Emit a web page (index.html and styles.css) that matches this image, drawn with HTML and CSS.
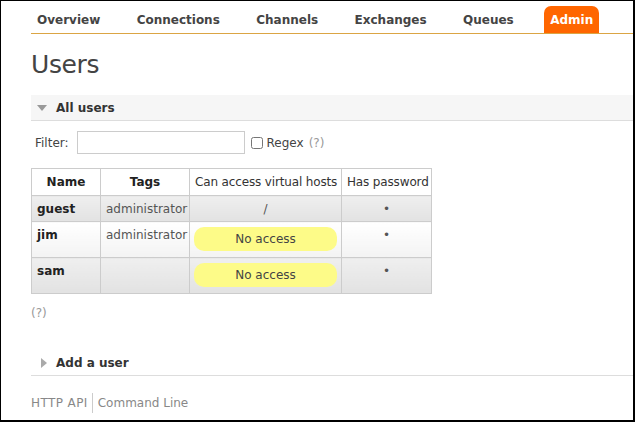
FILE: index.html
```html
<!DOCTYPE html>
<html>
<head>
<meta charset="utf-8">
<title>Users</title>
<link rel="stylesheet" href="styles.css">
</head>
<body>
<div class="frame">
  <nav class="tabs">
    <ul>
      <li><a>Overview</a></li>
      <li><a>Connections</a></li>
      <li><a>Channels</a></li>
      <li><a>Exchanges</a></li>
      <li><a>Queues</a></li>
      <li><a class="active">Admin</a></li>
    </ul>
  </nav>
  <main>
    <h1>Users</h1>
    <section class="section open">
      <h2><span class="arrow-down"></span>All users</h2>
      <div class="filter">
        <span class="filter-label">Filter:</span>
        <input class="filter-input" type="text">
        <label class="regex"><input type="checkbox"><span class="regex-text">Regex</span><span class="help">(?)</span></label>
      </div>
      <table class="list">
        <colgroup>
          <col class="c-name"><col class="c-tags"><col class="c-vhosts"><col class="c-pass">
        </colgroup>
        <thead>
          <tr><th class="bold">Name</th><th class="bold">Tags</th><th>Can access virtual hosts</th><th>Has password</th></tr>
        </thead>
        <tbody>
          <tr class="alt1"><td class="name">guest</td><td class="tags">administrator</td><td class="center">/</td><td class="center">•</td></tr>
          <tr class="alt2"><td class="name">jim</td><td class="tags">administrator</td><td class="pill-cell"><span class="pill">No access</span></td><td class="center">•</td></tr>
          <tr class="alt1"><td class="name">sam</td><td class="tags"></td><td class="pill-cell"><span class="pill">No access</span></td><td class="center">•</td></tr>
        </tbody>
      </table>
      <p class="help help-block">(?)</p>
    </section>
    <section class="section closed">
      <h2><span class="arrow-right"></span>Add a user</h2>
    </section>
  </main>
  <footer class="footer">
    <a class="api">HTTP API</a><span class="sep"></span><a>Command Line</a>
  </footer>
</div>
</body>
</html>
```

FILE: styles.css
```css
html, body {
  margin: 0;
  padding: 0;
  background: #fff;
}

body {
  font-family: "DejaVu Sans", Verdana, sans-serif;
  font-size: 12px;
  color: #444;
}

.frame {
  width: 635px;
  height: 422px;
  box-sizing: border-box;
  border-style: solid;
  border-color: #000;
  border-width: 1px 2px 2px 1px;
  padding-left: 30px;
  overflow: hidden;
}

.tabs {
  padding-top: 5px;
}

.tabs ul {
  display: flex;
  gap: 24.4px;
  list-style: none;
  margin: 0;
  padding: 0;
  border-bottom: 1px solid #dba544;
}

.tabs a {
  display: block;
  padding: 1px 6px 0;
  line-height: 26px;
  font-weight: bold;
  color: #444;
}

.tabs a.active {
  background: #f60;
  color: #fff;
  border-radius: 7px 7px 0 0;
}

h1 {
  margin: 16px 0 15px;
  font-size: 25px;
  line-height: 30px;
  font-weight: normal;
  letter-spacing: -0.4px;
  color: #444;
}

.section h2 {
  display: flex;
  align-items: center;
  margin: 0;
  height: 25px;
  font-size: 12px;
  font-weight: bold;
  color: #333;
  border-bottom: 1px solid #ddd;
}

.section.open h2 {
  background: #f6f6f6;
}

.arrow-down {
  width: 0;
  height: 0;
  border-left: 5px solid transparent;
  border-right: 5px solid transparent;
  border-top: 6px solid #999;
  margin-left: 6px;
  margin-right: 9px;
}

.arrow-right {
  width: 0;
  height: 0;
  border-top: 5px solid transparent;
  border-bottom: 5px solid transparent;
  border-left: 6px solid #aaa;
  margin-left: 10px;
  margin-right: 9px;
}

.filter {
  display: flex;
  align-items: center;
  margin-top: 10px;
  padding-left: 4px;
  color: #444;
}

.filter-label {
  margin-right: 8px;
}

.filter-input {
  width: 168px;
  height: 23px;
  box-sizing: border-box;
  border: 1px solid #ccc;
  margin: 0;
  padding: 2px 4px;
  font: inherit;
}

.regex {
  display: flex;
  align-items: center;
  margin-left: 6px;
}

.regex input {
  margin: 0 4px 0 0;
  width: 12px;
  height: 12px;
}

.regex-text {
  margin-right: 5px;
}

.help {
  color: #999;
}

.list {
  margin-top: 14px;
  border-collapse: collapse;
  table-layout: fixed;
  width: 401px;
  border: 1px solid #ccc;
}

.c-name { width: 69px; }
.c-tags { width: 89px; }
.c-vhosts { width: 152px; }
.c-pass { width: 90px; }

.list th, .list td {
  border: 1px solid #ccc;
  padding: 6px 5px 5px;
  line-height: 14px;
  vertical-align: top;
  white-space: nowrap;
}

.list th {
  padding-bottom: 6px;
  background: #fff;
  font-weight: normal;
  color: #333;
  text-align: center;
  letter-spacing: -0.15px;
}

.list th.bold {
  font-weight: bold;
  color: #222;
  letter-spacing: 0;
}

.list tr.alt1 td {
  background: linear-gradient(#efefef, #e2e2e2);
}

.list tr.alt2 td {
  background: linear-gradient(#ffffff, #f3f3f3);
}

.list td.name {
  font-weight: bold;
  color: #222;
}

.list td.tags {
  color: #555;
}

.list td.center {
  text-align: center;
  color: #555;
}

.list td.pill-cell {
  padding: 5px 4px 6px;
}

.pill {
  display: block;
  height: 24px;
  line-height: 24px;
  background: #fdfb88;
  border-radius: 10px;
  text-align: center;
  color: #444;
}

.help-block {
  margin: 12px 0 30px;
  line-height: 14px;
}

.footer {
  display: flex;
  align-items: center;
  margin-top: 17px;
  height: 20px;
  color: #888;
}

.footer .api {
  letter-spacing: 0.4px;
}

.footer .sep {
  width: 1px;
  height: 20px;
  background: #ccc;
  margin: 0 5px 0 4px;
}
```
